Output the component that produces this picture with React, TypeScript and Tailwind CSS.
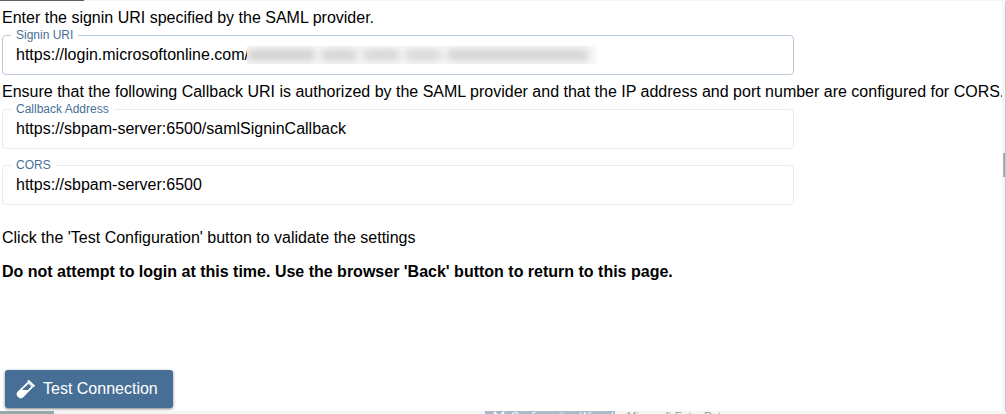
import { useState } from "react";

type FieldProps = {
  id: string;
  label: string;
  value: string;
  readOnly?: boolean;
  redacted?: boolean;
  className?: string;
};

function Field({ id, label, value, readOnly, redacted, className = "" }: FieldProps) {
  const [text, setText] = useState(value);
  const border = readOnly ? "border-[#e9ecf2]" : "border-[#b9c8d9]";
  return (
    <fieldset className={`relative w-full max-w-[792px] min-w-0 rounded border px-2 ${border} ${className}`}>
      <legend className="h-3.5 px-[5px] text-xs leading-[14px] text-[#476f96]">
        <label htmlFor={id}>{label}</label>
      </legend>
      <input
        id={id}
        type="text"
        value={text}
        readOnly={readOnly}
        onChange={(e) => setText(e.target.value)}
        className="mt-px mb-[7px] block h-6 w-full bg-transparent px-[5px] text-base leading-6 text-black outline-none"
      />
      {redacted && (
        <div
          aria-hidden="true"
          className="pointer-events-none absolute top-1 left-[244px] flex h-[18px] w-[350px] items-center gap-1.5 overflow-hidden bg-[#fbfbfb]"
        >
          <span className="h-3 w-[68px] bg-[#cfcfcf] blur-[4px]" />
          <span className="h-3 w-9 bg-[#d2d2d2] blur-[4px]" />
          <span className="h-3 w-9 bg-[#d4d4d4] blur-[4px]" />
          <span className="h-3 w-9 bg-[#d6d6d6] blur-[4px]" />
          <span className="h-3 w-[142px] bg-[#d2d2d2] blur-[4px]" />
        </div>
      )}
    </fieldset>
  );
}

function TestTubeIcon() {
  return (
    <svg viewBox="0 0 20 20" className="size-5" fill="none" aria-hidden="true">
      <path d="M12 1.500 18.500 7.500" stroke="#fff" strokeWidth="2" />
      <path d="M11.800 2.800 2 12.200A4 4 0 0 0 7.600 18L17.200 8Z" fill="#fff" />
      <path d="M12.500 4.800 15.300 7.500 11.900 11H6Z" fill="#476f96" />
    </svg>
  );
}

function WrenchIcon() {
  return (
    <svg viewBox="0 0 12 12" className="size-3 shrink-0" fill="none" stroke="#fff" strokeWidth="2" aria-hidden="true">
      <path d="M1 1 11 11M11 1 1 11" />
    </svg>
  );
}

export default function App() {
  return (
    <div className="flex min-h-screen flex-col overflow-hidden bg-white font-['Liberation_Sans',Arial,sans-serif] text-base text-black">
      <div className="h-px bg-[#f5f5f5]">
        <div className="h-px w-[84px] bg-[#5f5f61]" />
      </div>
      <div className="flex grow">
        <main className="flex min-w-0 grow flex-col items-start pt-[5px] pl-0.5">
          <p className="leading-6">Enter the signin URI specified by the SAML provider.</p>
          <Field id="signin" label="Signin URI" value="https://login.microsoftonline.com/" redacted className="-mt-0.5" />
          <p className="mt-[5px] leading-6 whitespace-nowrap">
            Ensure that the following Callback URI is authorized by the SAML provider and that the IP address and port
            number are configured for CORS.
          </p>
          <Field
            id="callback"
            label="Callback Address"
            value="https://sbpam-server:6500/samlSigninCallback"
            readOnly
            className="-mt-0.5"
          />
          <Field id="cors" label="CORS" value="https://sbpam-server:6500" readOnly className="mt-[9px]" />
          <p className="mt-[21px] leading-6">Click the 'Test Configuration' button to validate the settings</p>
          <p className="mt-2.5 leading-6 font-bold">
            Do not attempt to login at this time. Use the browser 'Back' button to return to this page.
          </p>
          <button
            type="button"
            className="mt-auto mb-[3px] ml-[3px] flex h-[38px] items-center gap-[7px] rounded-[3px] bg-[#476f96] pr-[15px] pl-[11px] text-white shadow-[0_1px_3px_rgba(0,0,0,0.5)]"
          >
            <TestTubeIcon />
            Test Connection
          </button>
        </main>
        <div className="flex w-1 shrink-0 flex-col border-r border-[#c8c8c8] bg-[#f5f5f5] pt-[152px]">
          <div className="ml-px h-6 border-l border-[#d5aaa5] bg-[#86a9c9]" />
        </div>
      </div>
      <footer className="flex h-[3px] overflow-hidden bg-[#f5f5f5] text-[11px] leading-[10px]">
        <div className="w-[54px] bg-[#95a9aa]" />
        <div className="ml-[431px] flex w-[130px] gap-1.5 bg-[#a9bacb] pl-2 whitespace-nowrap text-white">
          <WrenchIcon />
          Configuration Wizard
        </div>
        <div className="ml-3 whitespace-nowrap text-[#999]">Microsoft Entra Data</div>
      </footer>
    </div>
  );
}
